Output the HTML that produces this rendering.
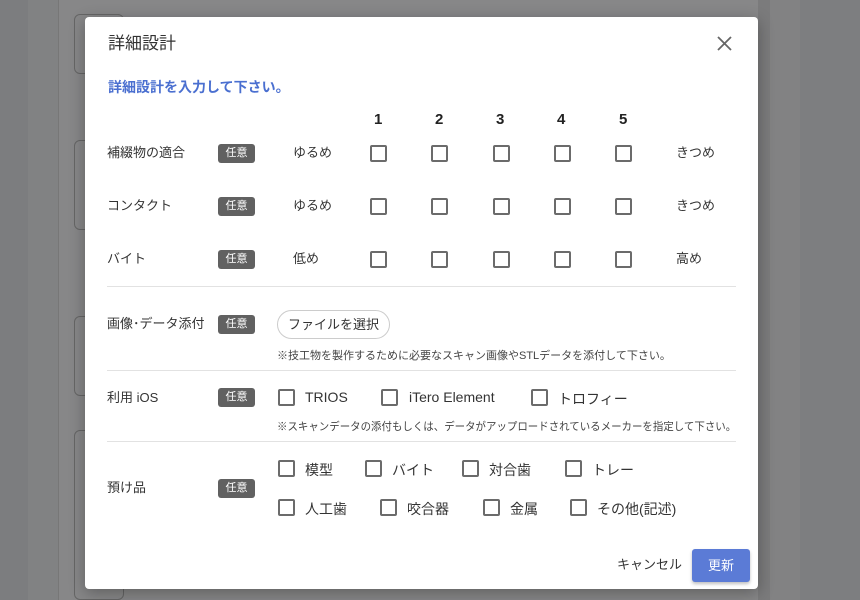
<!DOCTYPE html>
<html><head><meta charset="utf-8"><style>
*{margin:0;padding:0;box-sizing:border-box}
body{width:860px;height:600px;overflow:hidden;position:relative;background:#878788;font-family:"Liberation Sans","Noto Sans CJK JP",sans-serif;color:#333}
.a{position:absolute;white-space:nowrap}
.t{font-size:13px;line-height:16px;color:#333}
.cb{position:absolute;width:17px;height:17px;border:2px solid #6b6b6b;border-radius:2px;background:#fff}
.bd{position:absolute;width:37px;height:19px;background:#616161;color:#fff;border-radius:3px;font-size:11px;line-height:19px;text-align:center}
.hr{position:absolute;left:107px;width:629px;height:1px;background:#e2e2e2}
.n{font-size:15px;font-weight:bold;color:#222}
.note{font-size:11px;color:#444}
.lb{font-size:14px;color:#333}
</style></head><body>
<div class="a" style="left:0;top:0;width:28px;height:600px;background:#7c7d7f"></div>
<div class="a" style="left:28px;top:0;width:30px;height:600px;background:#818283"></div>
<div class="a" style="left:58px;top:0;width:1px;height:600px;background:#777"></div>
<div class="a" style="left:74px;top:14px;width:50px;height:60px;border:1px solid #666;border-radius:6px"></div>
<div class="a" style="left:74px;top:140px;width:50px;height:90px;border:1px solid #666;border-radius:6px"></div>
<div class="a" style="left:74px;top:316px;width:50px;height:80px;border:1px solid #666;border-radius:6px"></div>
<div class="a" style="left:74px;top:430px;width:50px;height:170px;border:1px solid #666;border-radius:6px"></div>
<div class="a" style="left:758px;top:0;width:12px;height:600px;background:#7b7b7c"></div>
<div class="a" style="left:770px;top:0;width:30px;height:600px;background:#828283"></div>
<div class="a" style="left:800px;top:0;width:60px;height:600px;background:#7d7e80"></div>

<div class="a" style="left:85px;top:17px;width:673px;height:572px;background:#fff;border-radius:4px;box-shadow:0 4px 16px rgba(0,0,0,.3)"></div>

<div class="a" style="left:108px;top:33px;font-size:17px;line-height:22px;color:#333">詳細設計</div>
<svg class="a" style="left:717px;top:36px" width="15" height="15" viewBox="0 0 15 15"><path d="M1 1L14 14M14 1L1 14" stroke="#666" stroke-width="1.8"/></svg>
<div class="a" style="left:108px;top:78px;font-size:14px;line-height:18px;font-weight:bold;color:#4a6fd0">詳細設計を入力して下さい。</div>

<div class="a n" style="left:374px;top:111px">1</div>
<div class="a n" style="left:435px;top:111px">2</div>
<div class="a n" style="left:496px;top:111px">3</div>
<div class="a n" style="left:557px;top:111px">4</div>
<div class="a n" style="left:619px;top:111px">5</div>

<div class="a t" style="left:107px;top:145px">補綴物の適合</div>
<div class="bd" style="left:218px;top:144px">任意</div>
<div class="a t" style="left:293px;top:145px">ゆるめ</div>
<div class="cb" style="left:370px;top:145px"></div><div class="cb" style="left:431px;top:145px"></div><div class="cb" style="left:493px;top:145px"></div><div class="cb" style="left:554px;top:145px"></div><div class="cb" style="left:615px;top:145px"></div>
<div class="a t" style="left:676px;top:145px">きつめ</div>

<div class="a t" style="left:107px;top:198px">コンタクト</div>
<div class="bd" style="left:218px;top:197px">任意</div>
<div class="a t" style="left:293px;top:198px">ゆるめ</div>
<div class="cb" style="left:370px;top:198px"></div><div class="cb" style="left:431px;top:198px"></div><div class="cb" style="left:493px;top:198px"></div><div class="cb" style="left:554px;top:198px"></div><div class="cb" style="left:615px;top:198px"></div>
<div class="a t" style="left:676px;top:198px">きつめ</div>

<div class="a t" style="left:107px;top:251px">バイト</div>
<div class="bd" style="left:218px;top:250px">任意</div>
<div class="a t" style="left:293px;top:251px">低め</div>
<div class="cb" style="left:370px;top:251px"></div><div class="cb" style="left:431px;top:251px"></div><div class="cb" style="left:493px;top:251px"></div><div class="cb" style="left:554px;top:251px"></div><div class="cb" style="left:615px;top:251px"></div>
<div class="a t" style="left:676px;top:251px">高め</div>

<div class="hr" style="top:286px"></div>

<div class="a t" style="left:107px;top:316px">画像･データ添付</div>
<div class="bd" style="left:218px;top:315px">任意</div>
<div class="a" style="left:277px;top:310px;width:113px;height:29px;border:1px solid #ccc;border-radius:15px;font-size:13px;line-height:27px;text-align:center;color:#333">ファイルを選択</div>
<div class="a note" style="left:277px;top:347px">※技工物を製作するために必要なスキャン画像やSTLデータを添付して下さい。</div>

<div class="hr" style="top:370px"></div>

<div class="a t" style="left:107px;top:390px">利用 iOS</div>
<div class="bd" style="left:218px;top:388px">任意</div>
<div class="cb" style="left:278px;top:389px"></div><div class="a lb" style="left:305px;top:389px">TRIOS</div>
<div class="cb" style="left:381px;top:389px"></div><div class="a lb" style="left:409px;top:389px">iTero Element</div>
<div class="cb" style="left:531px;top:389px"></div><div class="a lb" style="left:558px;top:389px">トロフィー</div>
<div class="a note" style="left:277px;top:418px;transform:scaleX(0.95);transform-origin:0 0">※スキャンデータの添付もしくは、データがアップロードされているメーカーを指定して下さい。</div>

<div class="hr" style="top:441px"></div>

<div class="a t" style="left:107px;top:480px">預け品</div>
<div class="bd" style="left:218px;top:479px">任意</div>
<div class="cb" style="left:278px;top:460px"></div><div class="a lb" style="left:305px;top:460px">模型</div>
<div class="cb" style="left:365px;top:460px"></div><div class="a lb" style="left:392px;top:460px">バイト</div>
<div class="cb" style="left:462px;top:460px"></div><div class="a lb" style="left:489px;top:460px">対合歯</div>
<div class="cb" style="left:565px;top:460px"></div><div class="a lb" style="left:592px;top:460px">トレー</div>
<div class="cb" style="left:278px;top:499px"></div><div class="a lb" style="left:305px;top:499px">人工歯</div>
<div class="cb" style="left:380px;top:499px"></div><div class="a lb" style="left:407px;top:499px">咬合器</div>
<div class="cb" style="left:483px;top:499px"></div><div class="a lb" style="left:510px;top:499px">金属</div>
<div class="cb" style="left:570px;top:499px"></div><div class="a lb" style="left:597px;top:499px">その他(記述)</div>

<div class="a t" style="left:617px;top:557px">キャンセル</div>
<div class="a" style="left:692px;top:549px;width:58px;height:33px;background:#5b7bd6;border-radius:3px;color:#fff;font-size:13px;line-height:33px;text-align:center;box-shadow:0 2px 3px rgba(0,0,0,.25)">更新</div>
</body></html>
